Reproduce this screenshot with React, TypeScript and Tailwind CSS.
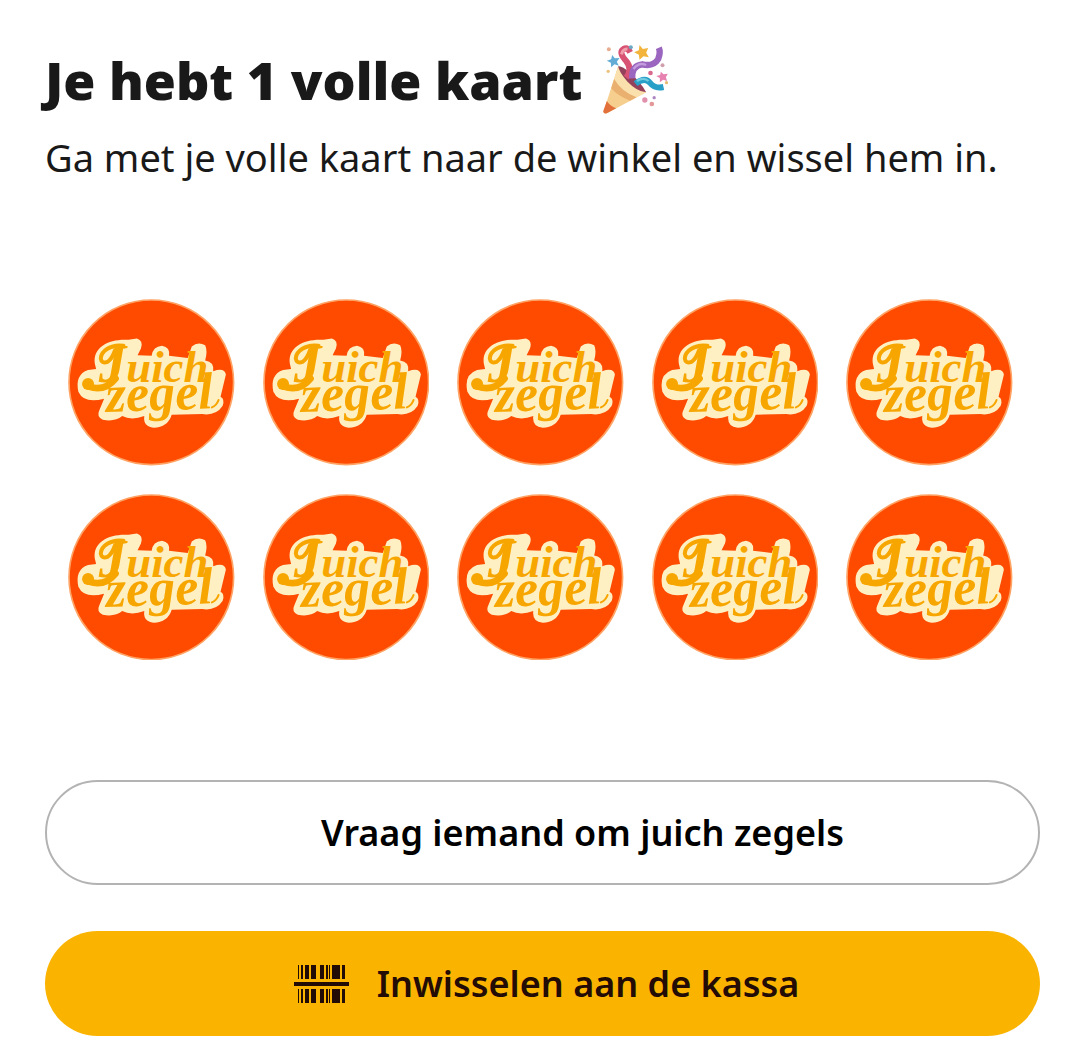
import React from 'react';

const AANTAL_ZEGELS = 10;

const BARCODE_LINES = [
    { x: 4, width: 1 },
    { x: 7, width: 2 },
    { x: 11, width: 4 },
    { x: 17, width: 5 },
    { x: 26, width: 4 },
    { x: 32, width: 2 },
    { x: 35, width: 1 },
    { x: 38, width: 8 },
    { x: 48, width: 3 }
];

const PartyPopper: React.FC = () => (
    <svg viewBox="0 0 200 210" className="h-[70px] w-[67px] shrink-0" role="img" aria-label="Confetti">
        {/* Cone */}
        <path d="M48 64 L4 200 Q6 208 16 204 L132 142 Q112 136 84 108 Q60 84 48 64 Z" fill="#f6cf8e" />
        <path d="M48 64 L30 120 Q56 160 88 165 L132 142 Q108 135 84 108 Z" fill="#fae0ad" />
        <path d="M36 102 Q58 140 103 157 L84 167 Q48 154 27 130 Z" fill="#e9b070" />
        <path d="M14 168 Q24 184 42 190 L14 205 Q4 208 3 199 Z" fill="#e2703a" />
        <path d="M48 64 Q58 61 82 82 Q116 112 132 142 Q104 139 76 110 Q51 82 48 64 Z" fill="#94415c" />
        {/* Streamers */}
        <path d="M72 98 Q92 72 72 48 Q48 22 64 12 Q76 6 84 22" fill="none" stroke="#d75273" strokeWidth="18" />
        <path d="M58 28 Q62 11 76 12" fill="none" stroke="#f0a0ad" strokeWidth="9" />
        <path d="M90 100 Q88 62 120 58 Q154 66 168 42 Q176 22 170 8" fill="none" stroke="#9a66bf" strokeWidth="19" />
        <path d="M94 72 Q110 50 132 60" fill="none" stroke="#c49bdd" strokeWidth="7" />
        <path d="M100 116 Q128 94 144 114 Q158 132 184 126" fill="none" stroke="#289fc7" strokeWidth="18" />
        <path d="M104 108 Q125 95 139 108" fill="none" stroke="#72cbe1" strokeWidth="7" />
        {/* Stars */}
        <path d="M112 0 L122 12 L138 9 L132 23 L140 37 L124 34 L112 44 L110 29 L96 22 L110 16 Z" fill="#f2b43a" />
        <path d="M30 30 L38 40 L52 39 L44 50 L50 62 L37 58 L27 67 L26 53 L14 47 L27 43 Z" fill="#63acd5" />
        <path d="M176 80 L184 88 L197 86 L191 97 L195 108 L183 104 L173 112 L173 99 L162 93 L174 90 Z" fill="#e681b0" />
        {/* Confetti */}
        <circle cx="20" cy="13" r="6" fill="#e8ad91" />
        <circle cx="86" cy="7" r="6" fill="#6ca9c2" />
        <circle cx="18" cy="79" r="5" fill="#edc27d" />
        <circle cx="145" cy="84" r="7" fill="#d9698c" />
        <circle cx="181" cy="61" r="6" fill="#d1a0ac" />
        <circle cx="128" cy="165" r="8" fill="#e291ac" />
        <circle cx="156" cy="158" r="5" fill="#ad86c1" />
        <circle cx="149" cy="177" r="7" fill="#e39798" />
        <circle cx="193" cy="113" r="5" fill="#e6bc75" />
    </svg>
);

const Zegel: React.FC = () => (
    <svg viewBox="24 30 498 498" className="block w-full">
        <circle cx="273" cy="279" r="246" fill="#ff4b00" stroke="#ffa365" strokeWidth="5" />
        {/* Cream backing behind both words */}
        <path
            d="M104 222 C98 172 150 148 205 152 L230 148 Q250 154 242 178 L232 198 L274 200 Q278 172 305 170 Q330 174 326 200 L382 206 L394 172 Q412 156 434 168 Q442 184 434 214 Q462 218 458 246 Q492 234 496 256 L480 322 Q494 330 486 350 Q466 380 425 374 L334 376 Q322 414 280 415 Q248 412 252 380 Q214 394 186 380 Q164 398 128 391 Q108 382 118 362 L132 328 Q72 344 55 307 Q44 256 84 242 L108 239 Z"
            fill="#fff0c4"
            strokeLinejoin="round"
        />
        {/* Swash of the first letter */}
        <path d="M190 170 C152 164 122 186 122 208 Q124 224 142 218 Q156 208 164 184" fill="none" stroke="#f7a600" strokeWidth="12" strokeLinecap="round" />
        <path d="M166 268 Q134 308 86 292" fill="none" stroke="#f7a600" strokeWidth="20" strokeLinecap="round" />
        <circle cx="84" cy="284" r="18" fill="#f7a600" />
        <g
            className="font-['Liberation_Serif',serif] font-bold italic"
            fill="#f7a600"
        >
            <text x="116" y="277" fontSize="134">
                <tspan fontSize="164">J</tspan>uich
            </text>
            <text x="138" y="368" fontSize="156" transform="rotate(-2 138 368)">zegel</text>
        </g>
        {/* Hairlines that lead out of the words */}
        <path d="M430 272 Q440 266 444 254 M454 354 Q468 348 474 332" fill="none" stroke="#f7a600" strokeWidth="6" strokeLinecap="round" />
    </svg>
);

const BarcodeIcon: React.FC = () => (
    <svg viewBox="0 0 55 40" className="h-10 w-[55px] shrink-0" fill="#230b06" aria-hidden="true">
        {BARCODE_LINES.map(line => (
            <React.Fragment key={line.x}>
                <rect x={line.x} y="1" width={line.width} height="14" />
                <rect x={line.x} y="25" width={line.width} height="14" />
            </React.Fragment>
        ))}
        <rect x="0" y="18" width="55" height="4" />
    </svg>
);

const App: React.FC = () => {
    return (
        <main className="min-h-screen bg-white pt-[45px] pr-[39px] pb-7 pl-[45px] font-['Noto_Sans',sans-serif] text-[#191919]">
            <header>
                <div className="flex items-center gap-5">
                    <h1 className="text-[52px] leading-[70px] font-black">Je hebt 1 volle kaart</h1>
                    <PartyPopper />
                </div>
                <p className="mt-3 text-[38px] leading-[60px]">
                    Ga met je volle kaart naar de winkel en wissel hem in.
                </p>
            </header>

            {/* Volle spaarkaart */}
            <section aria-label="Spaarkaart" className="mt-[112px] grid grid-cols-5 gap-7 pr-[27px] pl-[23px]">
                {Array.from({ length: AANTAL_ZEGELS }, (_, i) => (
                    <Zegel key={i} />
                ))}
            </section>

            <div className="mt-[120px] flex flex-col gap-[46px]">
                <button
                    type="button"
                    className="flex h-[105px] items-center justify-center rounded-full border-2 border-[#b3b3b3] pl-20 text-[36px] font-semibold text-black"
                >
                    Vraag iemand om juich zegels
                </button>
                <button
                    type="button"
                    className="flex h-[105px] items-center justify-center gap-7 rounded-full bg-[#fab400] pl-2 text-[36px] font-semibold text-[#230b06]"
                >
                    <BarcodeIcon />
                    Inwisselen aan de kassa
                </button>
            </div>
        </main>
    );
};

export default App;
